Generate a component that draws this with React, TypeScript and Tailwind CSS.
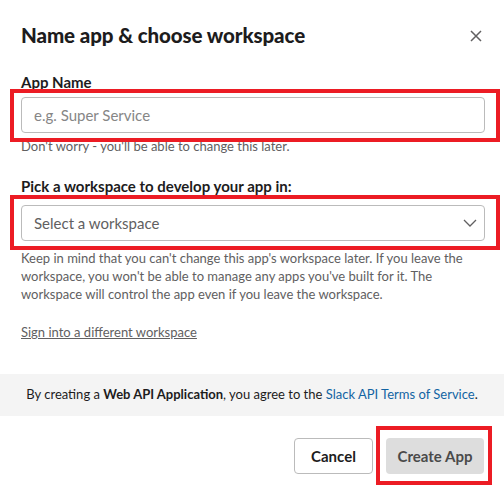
import React from 'react';

const Highlight: React.FC<{ className: string }> = ({ className }) => (
  <div className={`pointer-events-none absolute border-[4px] border-[#ec1c24] ${className}`} />
);

const App: React.FC = () => {
  return (
    <div className="w-[504px] h-[492px] bg-white text-[#1d1c1d] font-['Lato','Liberation_Sans',sans-serif] overflow-hidden">
      {/* Header */}
      <div className="flex items-center justify-between pl-[21px] pr-[22px] pt-[20px]">
        <h1 className="text-[20.5px] leading-[30px] font-black tracking-[-0.1px]">Name app &amp; choose workspace</h1>
        <button className="mt-[2px] text-[#616061]">
          <svg width="12" height="12" viewBox="0 0 12 12" fill="none" stroke="currentColor" strokeWidth="1.5">
            <path d="M1 1l10 10M11 1L1 11" />
          </svg>
        </button>
      </div>

      <div className="pl-[21px] pr-[19px]">
        {/* App name */}
        <label className="block mt-[21px] text-[15px] leading-[22px] font-bold">App Name</label>
        <div className="relative mt-[4px]">
          <input
            className="w-full h-[36px] rounded-[4px] border border-[#bbbbbb] px-[12px] text-[15px] outline-none placeholder:text-[#868686]"
            placeholder="e.g. Super Service"
          />
          <Highlight className="-left-[11px] -right-[15px] -top-[8px] -bottom-[9px]" />
        </div>
        <p className="mt-[4px] text-[13px] leading-[18px] text-[#616061]">Don't worry - you'll be able to change this later.</p>

        {/* Workspace */}
        <label className="block mt-[20px] text-[15px] leading-[22px] font-bold">Pick a workspace to develop your app in:</label>
        <div className="relative mt-[8px]">
          <div className="flex items-center justify-between h-[36px] rounded-[4px] border border-[#bbbbbb] pl-[12px] pr-[6px] text-[15px] text-[#616061]">
            <span>Select a workspace</span>
            <svg width="16" height="10" viewBox="0 0 16 10" fill="none" stroke="#616061" strokeWidth="1.3">
              <path d="M2 2l6 6 6-6" />
            </svg>
          </div>
          <Highlight className="-left-[11px] -right-[15px] -top-[10px] -bottom-[9px]" />
        </div>
        <p className="mt-[8px] text-[13px] leading-[18px] text-[#616061]">
          Keep in mind that you can't change this app's workspace later. If you leave the workspace, you won't be able to
          manage any apps you've built for it. The workspace will control the app even if you leave the workspace.
        </p>
        <a className="inline-block mt-[20px] text-[13px] leading-[18px] text-[#616061] underline">Sign into a different workspace</a>
      </div>

      {/* Terms */}
      <div className="mt-[31px] h-[42px] bg-[#f4f4f4] flex items-center justify-center text-[13px] text-[#1d1c1d]">
        <span>
          By creating a <b className="font-bold">Web API Application</b>, you agree to the{' '}
          <a className="text-[#1264a3]">Slack API Terms of Service</a>.
        </span>
      </div>

      {/* Footer buttons */}
      <div className="flex justify-end gap-[13px] pr-[20px] pt-[22px]">
        <button className="h-[36px] w-[79px] rounded-[4px] border border-[#bbbbbb] bg-white text-[15px] font-bold">Cancel</button>
        <div className="relative">
          <button className="h-[36px] w-[98px] rounded-[4px] bg-[#dddddd] text-[15px] font-bold text-[#4a4a4a]">Create App</button>
          <Highlight className="-left-[10px] -right-[8px] -top-[12px] -bottom-[11px]" />
        </div>
      </div>
    </div>
  );
};

export default App;
